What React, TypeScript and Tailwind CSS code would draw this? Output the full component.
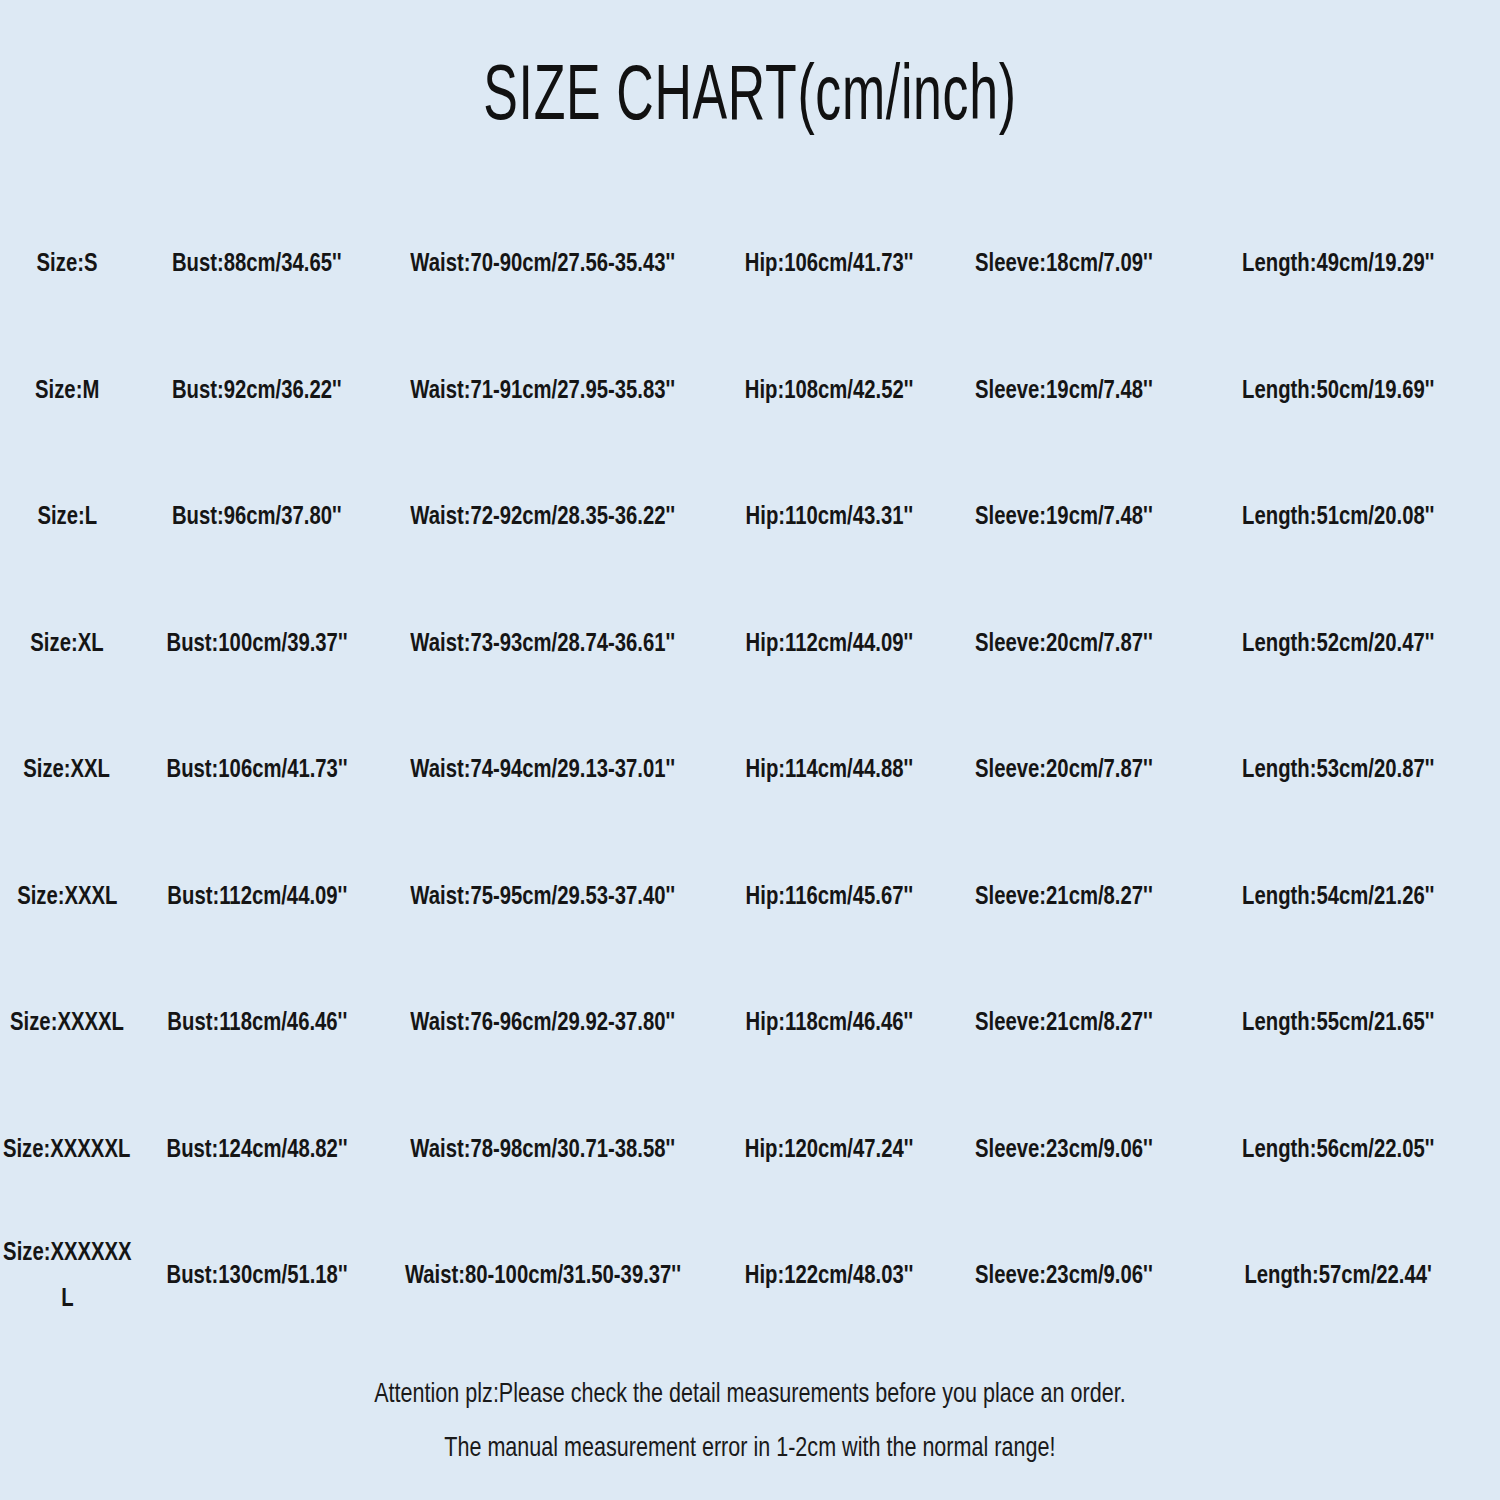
import React from "react";

interface IRow {
  size: React.ReactNode;
  bust: string;
  waist: string;
  hip: string;
  sleeve: string;
  length: string;
}

const rows: IRow[] = [
  { size: "Size:S", bust: "Bust:88cm/34.65''", waist: "Waist:70-90cm/27.56-35.43''", hip: "Hip:106cm/41.73''", sleeve: "Sleeve:18cm/7.09''", length: "Length:49cm/19.29''" },
  { size: "Size:M", bust: "Bust:92cm/36.22''", waist: "Waist:71-91cm/27.95-35.83''", hip: "Hip:108cm/42.52''", sleeve: "Sleeve:19cm/7.48''", length: "Length:50cm/19.69''" },
  { size: "Size:L", bust: "Bust:96cm/37.80''", waist: "Waist:72-92cm/28.35-36.22''", hip: "Hip:110cm/43.31''", sleeve: "Sleeve:19cm/7.48''", length: "Length:51cm/20.08''" },
  { size: "Size:XL", bust: "Bust:100cm/39.37''", waist: "Waist:73-93cm/28.74-36.61''", hip: "Hip:112cm/44.09''", sleeve: "Sleeve:20cm/7.87''", length: "Length:52cm/20.47''" },
  { size: "Size:XXL", bust: "Bust:106cm/41.73''", waist: "Waist:74-94cm/29.13-37.01''", hip: "Hip:114cm/44.88''", sleeve: "Sleeve:20cm/7.87''", length: "Length:53cm/20.87''" },
  { size: "Size:XXXL", bust: "Bust:112cm/44.09''", waist: "Waist:75-95cm/29.53-37.40''", hip: "Hip:116cm/45.67''", sleeve: "Sleeve:21cm/8.27''", length: "Length:54cm/21.26''" },
  { size: "Size:XXXXL", bust: "Bust:118cm/46.46''", waist: "Waist:76-96cm/29.92-37.80''", hip: "Hip:118cm/46.46''", sleeve: "Sleeve:21cm/8.27''", length: "Length:55cm/21.65''" },
  { size: "Size:XXXXXL", bust: "Bust:124cm/48.82''", waist: "Waist:78-98cm/30.71-38.58''", hip: "Hip:120cm/47.24''", sleeve: "Sleeve:23cm/9.06''", length: "Length:56cm/22.05''" },
  {
    size: (
      <>
        Size:XXXXXX
        <br />L
      </>
    ),
    bust: "Bust:130cm/51.18''",
    waist: "Waist:80-100cm/31.50-39.37''",
    hip: "Hip:122cm/48.03''",
    sleeve: "Sleeve:23cm/9.06''",
    length: "Length:57cm/22.44'",
  },
];

const Cell: React.FC<{ children: React.ReactNode }> = ({ children }) => (
  <div className="flex justify-center items-center whitespace-nowrap">
    <span className="inline-block scale-x-[0.78] text-[26px] leading-[46px] font-bold text-[#151515] text-center">
      {children}
    </span>
  </div>
);

export default function App() {
  return (
    <div
      className="w-[1500px] h-[1500px] bg-[#dde9f4] flex flex-col overflow-hidden"
      style={{ fontFamily: '"Liberation Sans", Arial, sans-serif' }}
    >
      <div className="h-[184px] mb-[6px] flex justify-center items-center">
        <span className="inline-block scale-x-[0.665] text-[78px] leading-none text-[#111] tracking-[1px]">
          SIZE CHART(cm/inch)
        </span>
      </div>

      <div className="mt-[9px] flex flex-col">
        {rows.map((r, i) => (
          <div
            key={i}
            className="h-[126.5px] grid grid-cols-[134px_246px_326px_246px_224px_324px] items-center"
          >
            <Cell>{r.size}</Cell>
            <Cell>{r.bust}</Cell>
            <Cell>{r.waist}</Cell>
            <Cell>{r.hip}</Cell>
            <Cell>{r.sleeve}</Cell>
            <Cell>{r.length}</Cell>
          </div>
        ))}
      </div>

      <div className="mt-[28px] flex flex-col items-center text-[28px] leading-[54px] text-[#1a1a1a]">
        <span className="inline-block scale-x-[0.77] whitespace-nowrap">
          Attention plz:Please check the detail measurements before you place an order.
        </span>
        <span className="inline-block scale-x-[0.77] whitespace-nowrap">
          The manual measurement error in 1-2cm with the normal range!
        </span>
      </div>
    </div>
  );
}
